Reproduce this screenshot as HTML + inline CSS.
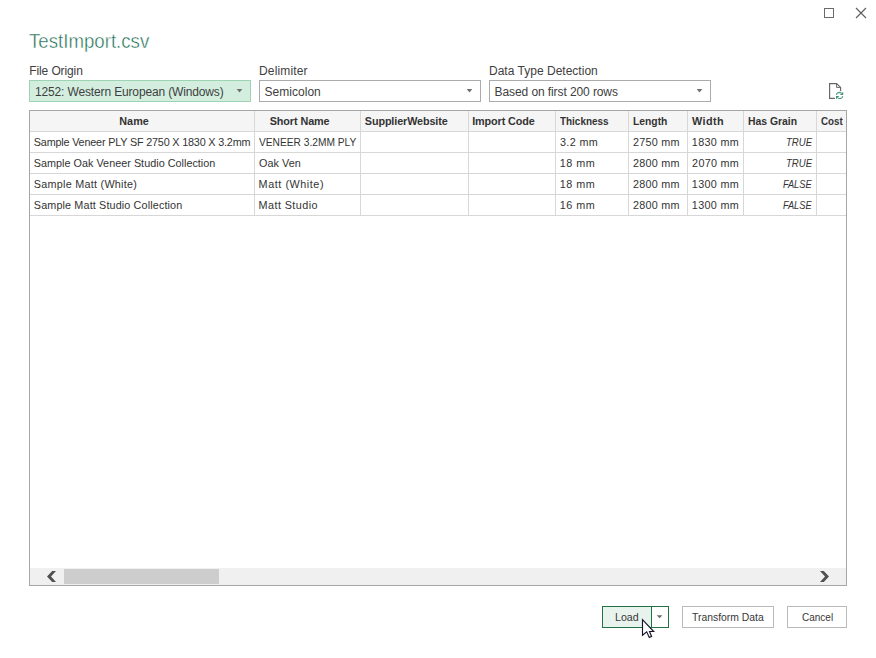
<!DOCTYPE html>
<html>
<head>
<meta charset="utf-8">
<title>TestImport.csv</title>
<style>
html,body{margin:0;padding:0;}
body{width:876px;height:658px;position:relative;overflow:hidden;background:#fff;font-family:"Liberation Sans",sans-serif;color:#333;}
.abs{position:absolute;}
.dd{position:absolute;top:80px;height:20px;width:220px;border:1px solid #ababab;background:#fff;}
.dd.sel{border-color:#9bd3b3;background:#d3eedf;}
.tri{position:absolute;width:0;height:0;border-left:3.5px solid transparent;border-right:3.5px solid transparent;border-top:4px solid #666;}
#grid{position:absolute;left:29px;top:110px;width:816px;height:474px;border:1px solid #a6a6a6;background:#fff;}
#hdr{position:absolute;left:0;top:0;width:816px;height:20px;background:#f5f5f5;}
.hl{position:absolute;left:0;width:816px;height:1px;background:#d7d7d7;}
.vl{position:absolute;top:0;height:105px;width:1px;background:#d7d7d7;}
#sb{position:absolute;left:0;top:457px;width:816px;height:17px;background:#f0f0f0;}
#thumb{position:absolute;left:34px;top:1px;width:155px;height:15px;background:#cdcdcd;}
.btn{position:absolute;top:606px;height:20px;border:1px solid #bababa;background:#fff;}
</style>
</head>
<body>
<!-- window controls -->
<svg class="abs" style="left:820px;top:4px" width="52" height="20" viewBox="0 0 52 20">
  <rect x="4.5" y="4.5" width="9" height="9" fill="none" stroke="#6a6a6a" stroke-width="1"/>
  <path d="M36 4 L46 14 M46 4 L36 14" stroke="#5e5e5e" stroke-width="1.15" fill="none"/>
</svg>

<!-- dropdowns -->
<div class="dd sel" style="left:29px"><svg class="abs" style="left:205px;top:7px" width="9" height="6" viewBox="0 0 9 6"><polygon points="1.7,1 7.3,1 4.5,4.6" fill="#6e6e6e"/></svg></div>
<div class="dd" style="left:259px"><svg class="abs" style="left:205px;top:7px" width="9" height="6" viewBox="0 0 9 6"><polygon points="1.7,1 7.3,1 4.5,4.6" fill="#6e6e6e"/></svg></div>
<div class="dd" style="left:489px"><svg class="abs" style="left:205px;top:7px" width="9" height="6" viewBox="0 0 9 6"><polygon points="1.7,1 7.3,1 4.5,4.6" fill="#6e6e6e"/></svg></div>

<!-- refresh file icon -->
<svg class="abs" style="left:826px;top:80px" width="20" height="22" viewBox="0 0 20 22">
  <path d="M8.9 18.4 H3.6 V3.6 H10.6 L14.6 7.4 V10.9" fill="none" stroke="#666" stroke-width="1.15"/>
  <path d="M10.6 3.6 V7.4 H14.6" fill="none" stroke="#666" stroke-width="1"/>
  <path d="M10.2 14.7 Q11.2 12.4 13 12.4 L15.4 12.6" fill="none" stroke="#4a9a7b" stroke-width="1.1"/>
  <path d="M17.2 11.7 V15 H13.9 Z" fill="#3d9373"/>
  <path d="M16.9 16.2 Q15.9 18.5 14.1 18.5 L11.7 18.3" fill="none" stroke="#4a9a7b" stroke-width="1.1"/>
  <path d="M10 19.2 V15.9 H13.3 Z" fill="#3d9373"/>
</svg>

<!-- data preview grid -->
<div id="grid">
  <div id="hdr"></div>
  <div class="hl" style="top:20px"></div>
  <div class="hl" style="top:41px"></div>
  <div class="hl" style="top:62px"></div>
  <div class="hl" style="top:83px"></div>
  <div class="hl" style="top:104px"></div>
  <div class="vl" style="left:224px"></div>
  <div class="vl" style="left:330px"></div>
  <div class="vl" style="left:438px"></div>
  <div class="vl" style="left:525px"></div>
  <div class="vl" style="left:598px"></div>
  <div class="vl" style="left:657px"></div>
  <div class="vl" style="left:713px"></div>
  <div class="vl" style="left:786px"></div>
  <div id="sb">
    <div id="thumb"></div>
    <svg class="abs" style="left:0;top:0" width="816" height="17" viewBox="0 0 816 17">
      <polygon points="17,8.5 22.2,3 26,3 21,8.5 26,14 22.2,14" fill="#505050"/>
      <polygon points="790,3 793.8,3 799,8.5 793.8,14 790,14 795,8.5" fill="#505050"/>
    </svg>
  </div>
</div>

<!-- buttons -->
<div class="btn" style="left:602px;width:65px;border-color:#217346;">
  <div class="abs" style="left:0;top:0;width:48px;height:20px;background:#e9f3ed;border-right:1px solid #217346"></div>
  <svg class="abs" style="left:52px;top:6px" width="9" height="7" viewBox="0 0 9 7"><polygon points="1.7,2.2 7.4,2.2 4.55,5.2" fill="#6a6a6a"/></svg>
</div>
<div class="btn" style="left:682px;width:90px"></div>
<div class="btn" style="left:787px;width:58px"></div>

<!-- text -->
<div id="title" style="position:absolute;white-space:nowrap;line-height:1;left:29.20px;top:32.49px;font-size:19.5px;font-weight:normal;font-style:normal;color:#166b4e;letter-spacing:0.000px;transform:scaleX(0.9564);transform-origin:0 0;-webkit-text-stroke:0.45px #fff">TestImport.csv</div>
<div id="l1" style="position:absolute;white-space:nowrap;line-height:1;left:29.30px;top:65.44px;font-size:12px;font-weight:normal;font-style:normal;color:#404040;letter-spacing:-0.115px">File Origin</div>
<div id="l2" style="position:absolute;white-space:nowrap;line-height:1;left:259.00px;top:65.44px;font-size:12px;font-weight:normal;font-style:normal;color:#404040;letter-spacing:0.156px">Delimiter</div>
<div id="l3" style="position:absolute;white-space:nowrap;line-height:1;left:489.00px;top:65.44px;font-size:12px;font-weight:normal;font-style:normal;color:#404040;letter-spacing:0.014px">Data Type Detection</div>
<div id="d1" style="position:absolute;white-space:nowrap;line-height:1;left:35.00px;top:85.54px;font-size:12px;font-weight:normal;font-style:normal;color:#404040;letter-spacing:-0.145px">1252: Western European (Windows)</div>
<div id="d2" style="position:absolute;white-space:nowrap;line-height:1;left:264.50px;top:85.54px;font-size:12px;font-weight:normal;font-style:normal;color:#404040;letter-spacing:0.031px">Semicolon</div>
<div id="d3" style="position:absolute;white-space:nowrap;line-height:1;left:494.60px;top:85.54px;font-size:12px;font-weight:normal;font-style:normal;color:#404040;letter-spacing:-0.093px">Based on first 200 rows</div>
<div id="h1" style="position:absolute;white-space:nowrap;line-height:1;left:119.25px;top:115.66px;font-size:10.8px;font-weight:bold;font-style:normal;color:#333;letter-spacing:0.067px">Name</div>
<div id="h2" style="position:absolute;white-space:nowrap;line-height:1;left:269.70px;top:115.66px;font-size:10.8px;font-weight:bold;font-style:normal;color:#333;letter-spacing:-0.078px">Short Name</div>
<div id="h3" style="position:absolute;white-space:nowrap;line-height:1;left:364.80px;top:115.66px;font-size:10.8px;font-weight:bold;font-style:normal;color:#333;letter-spacing:-0.104px">SupplierWebsite</div>
<div id="h4" style="position:absolute;white-space:nowrap;line-height:1;left:472.15px;top:115.66px;font-size:10.8px;font-weight:bold;font-style:normal;color:#333;letter-spacing:-0.095px">Import Code</div>
<div id="h5" style="position:absolute;white-space:nowrap;line-height:1;left:560.00px;top:115.66px;font-size:10.8px;font-weight:bold;font-style:normal;color:#333;letter-spacing:0.000px;transform:scaleX(0.9187);transform-origin:0 0">Thickness</div>
<div id="h6" style="position:absolute;white-space:nowrap;line-height:1;left:632.75px;top:115.66px;font-size:10.8px;font-weight:bold;font-style:normal;color:#333;letter-spacing:0.000px;transform:scaleX(0.9551);transform-origin:0 0">Length</div>
<div id="h7" style="position:absolute;white-space:nowrap;line-height:1;left:692.00px;top:115.66px;font-size:10.8px;font-weight:bold;font-style:normal;color:#333;letter-spacing:0.412px">Width</div>
<div id="h8" style="position:absolute;white-space:nowrap;line-height:1;left:747.65px;top:115.66px;font-size:10.8px;font-weight:bold;font-style:normal;color:#333;letter-spacing:0.000px;transform:scaleX(0.9628);transform-origin:0 0">Has Grain</div>
<div id="h9" style="position:absolute;white-space:nowrap;line-height:1;left:821.00px;top:115.66px;font-size:10.8px;font-weight:bold;font-style:normal;color:#333;letter-spacing:0.000px;transform:scaleX(0.9032);transform-origin:0 0">Cost</div>
<div id="r0a" style="position:absolute;white-space:nowrap;line-height:1;left:33.80px;top:136.56px;font-size:10.8px;font-weight:normal;font-style:normal;color:#333;letter-spacing:-0.174px">Sample Veneer PLY SF 2750 X 1830 X 3.2mm</div>
<div id="r0b" style="position:absolute;white-space:nowrap;line-height:1;left:259.35px;top:136.56px;font-size:10.8px;font-weight:normal;font-style:normal;color:#333;letter-spacing:0.000px;transform:scaleX(0.9444);transform-origin:0 0">VENEER 3.2MM PLY</div>
<div id="r0c" style="position:absolute;white-space:nowrap;line-height:1;left:559.90px;top:136.56px;font-size:10.8px;font-weight:normal;font-style:normal;color:#333;letter-spacing:0.380px">3.2 mm</div>
<div id="r0d" style="position:absolute;white-space:nowrap;line-height:1;left:633.00px;top:136.56px;font-size:10.8px;font-weight:normal;font-style:normal;color:#333;letter-spacing:0.233px">2750 mm</div>
<div id="r0e" style="position:absolute;white-space:nowrap;line-height:1;left:691.85px;top:136.56px;font-size:10.8px;font-weight:normal;font-style:normal;color:#333;letter-spacing:0.325px">1830 mm</div>
<div id="r0f" style="position:absolute;white-space:nowrap;line-height:1;left:786.00px;top:136.56px;font-size:10.8px;font-weight:normal;font-style:italic;color:#333;letter-spacing:0.000px;transform:scaleX(0.8861);transform-origin:0 0">TRUE</div>
<div id="r1a" style="position:absolute;white-space:nowrap;line-height:1;left:33.80px;top:157.56px;font-size:10.8px;font-weight:normal;font-style:normal;color:#333;letter-spacing:0.026px">Sample Oak Veneer Studio Collection</div>
<div id="r1b" style="position:absolute;white-space:nowrap;line-height:1;left:259.10px;top:157.56px;font-size:10.8px;font-weight:normal;font-style:normal;color:#333;letter-spacing:0.025px">Oak Ven</div>
<div id="r1c" style="position:absolute;white-space:nowrap;line-height:1;left:559.65px;top:157.56px;font-size:10.8px;font-weight:normal;font-style:normal;color:#333;letter-spacing:0.525px">18 mm</div>
<div id="r1d" style="position:absolute;white-space:nowrap;line-height:1;left:633.00px;top:157.56px;font-size:10.8px;font-weight:normal;font-style:normal;color:#333;letter-spacing:0.233px">2800 mm</div>
<div id="r1e" style="position:absolute;white-space:nowrap;line-height:1;left:692.10px;top:157.56px;font-size:10.8px;font-weight:normal;font-style:normal;color:#333;letter-spacing:0.283px">2070 mm</div>
<div id="r1f" style="position:absolute;white-space:nowrap;line-height:1;left:786.00px;top:157.56px;font-size:10.8px;font-weight:normal;font-style:italic;color:#333;letter-spacing:0.000px;transform:scaleX(0.8861);transform-origin:0 0">TRUE</div>
<div id="r2a" style="position:absolute;white-space:nowrap;line-height:1;left:33.80px;top:178.56px;font-size:10.8px;font-weight:normal;font-style:normal;color:#333;letter-spacing:0.261px">Sample Matt (White)</div>
<div id="r2b" style="position:absolute;white-space:nowrap;line-height:1;left:258.60px;top:178.56px;font-size:10.8px;font-weight:normal;font-style:normal;color:#333;letter-spacing:0.559px">Matt (White)</div>
<div id="r2c" style="position:absolute;white-space:nowrap;line-height:1;left:559.65px;top:178.56px;font-size:10.8px;font-weight:normal;font-style:normal;color:#333;letter-spacing:0.525px">18 mm</div>
<div id="r2d" style="position:absolute;white-space:nowrap;line-height:1;left:633.00px;top:178.56px;font-size:10.8px;font-weight:normal;font-style:normal;color:#333;letter-spacing:0.233px">2800 mm</div>
<div id="r2e" style="position:absolute;white-space:nowrap;line-height:1;left:691.85px;top:178.56px;font-size:10.8px;font-weight:normal;font-style:normal;color:#333;letter-spacing:0.325px">1300 mm</div>
<div id="r2f" style="position:absolute;white-space:nowrap;line-height:1;left:783.45px;top:178.56px;font-size:10.8px;font-weight:normal;font-style:italic;color:#333;letter-spacing:0.000px;transform:scaleX(0.8541);transform-origin:0 0">FALSE</div>
<div id="r3a" style="position:absolute;white-space:nowrap;line-height:1;left:33.80px;top:199.56px;font-size:10.8px;font-weight:normal;font-style:normal;color:#333;letter-spacing:0.137px">Sample Matt Studio Collection</div>
<div id="r3b" style="position:absolute;white-space:nowrap;line-height:1;left:258.60px;top:199.56px;font-size:10.8px;font-weight:normal;font-style:normal;color:#333;letter-spacing:0.430px">Matt Studio</div>
<div id="r3c" style="position:absolute;white-space:nowrap;line-height:1;left:559.65px;top:199.56px;font-size:10.8px;font-weight:normal;font-style:normal;color:#333;letter-spacing:0.525px">16 mm</div>
<div id="r3d" style="position:absolute;white-space:nowrap;line-height:1;left:633.00px;top:199.56px;font-size:10.8px;font-weight:normal;font-style:normal;color:#333;letter-spacing:0.233px">2800 mm</div>
<div id="r3e" style="position:absolute;white-space:nowrap;line-height:1;left:691.85px;top:199.56px;font-size:10.8px;font-weight:normal;font-style:normal;color:#333;letter-spacing:0.325px">1300 mm</div>
<div id="r3f" style="position:absolute;white-space:nowrap;line-height:1;left:783.45px;top:199.56px;font-size:10.8px;font-weight:normal;font-style:italic;color:#333;letter-spacing:0.000px;transform:scaleX(0.8541);transform-origin:0 0">FALSE</div>
<div id="b1" style="position:absolute;white-space:nowrap;line-height:1;left:615.00px;top:611.77px;font-size:11.5px;font-weight:normal;font-style:normal;color:#383838;letter-spacing:0.000px;transform:scaleX(0.9263);transform-origin:0 0">Load</div>
<div id="b2" style="position:absolute;white-space:nowrap;line-height:1;left:692.15px;top:611.77px;font-size:11.5px;font-weight:normal;font-style:normal;color:#383838;letter-spacing:0.000px;transform:scaleX(0.9022);transform-origin:0 0">Transform Data</div>
<div id="b3" style="position:absolute;white-space:nowrap;line-height:1;left:801.50px;top:611.77px;font-size:11.5px;font-weight:normal;font-style:normal;color:#383838;letter-spacing:0.000px;transform:scaleX(0.8696);transform-origin:0 0">Cancel</div>

<!-- mouse cursor -->
<svg class="abs" style="left:641px;top:618px" width="15" height="22" viewBox="0 0 15 22">
  <path d="M1.5 1.6 V17.3 L5.7 13.8 L8.3 19.4 L10.6 18.5 L8.5 13.5 H12.7 Z" fill="#fff" stroke="#16162a" stroke-width="1.15" stroke-linejoin="miter"/>
</svg>
</body>
</html>
